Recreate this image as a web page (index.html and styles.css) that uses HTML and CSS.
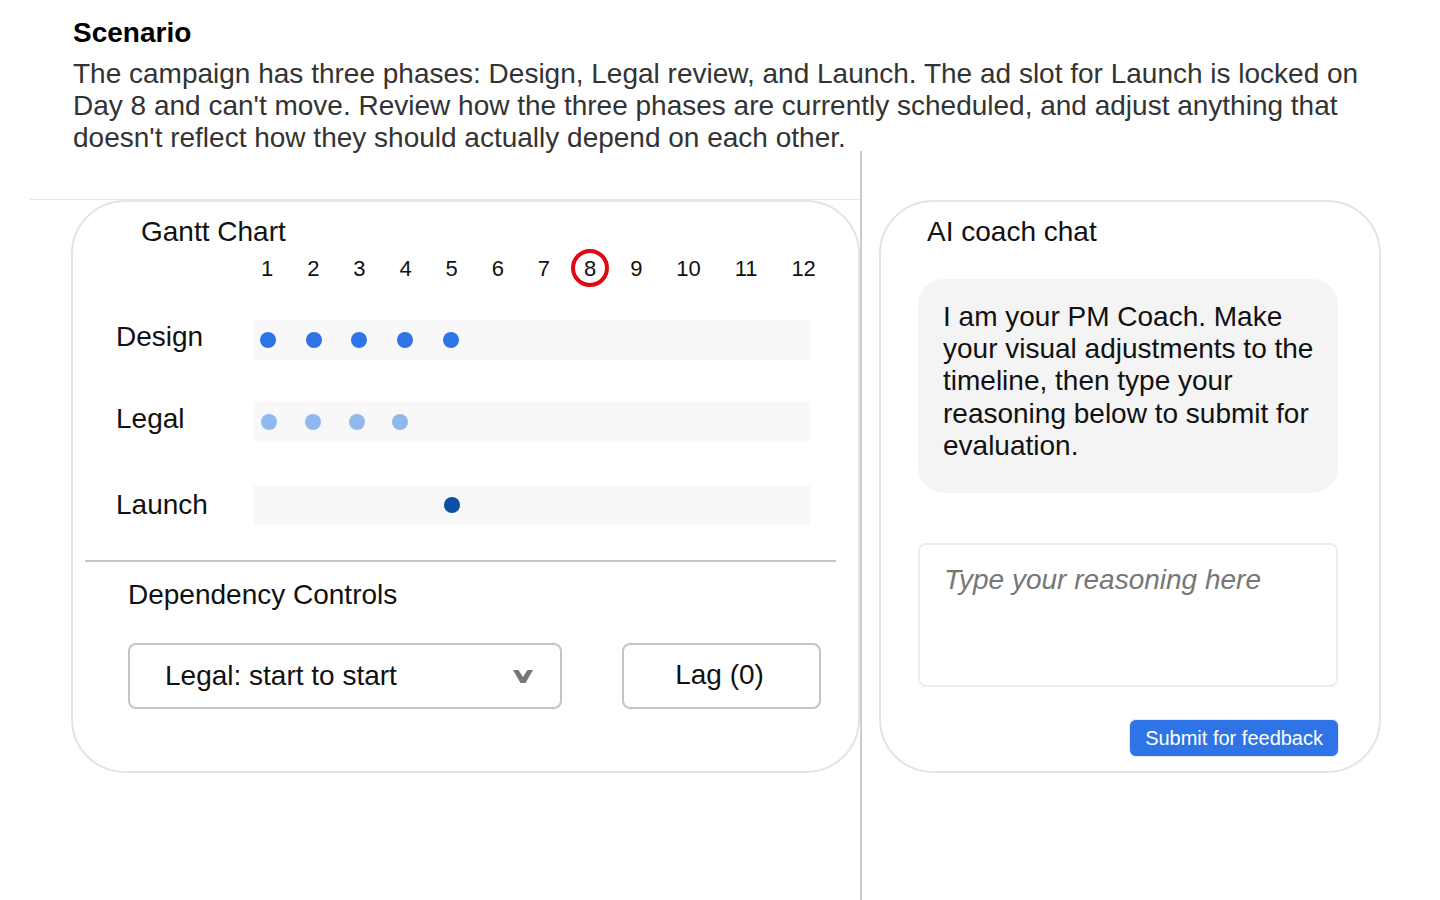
FILE: index.html
```html
<!DOCTYPE html>
<html lang="en">
<head>
<meta charset="utf-8">
<title>PM Coach – Scenario</title>
<link rel="stylesheet" href="styles.css">
</head>
<body>
<header class="scenario">
  <h1 class="scenario-title">Scenario</h1>
  <p class="scenario-text">The campaign has three phases: Design, Legal review, and Launch. The ad slot for Launch is locked on Day 8 and can't move. Review how the three phases are currently scheduled, and adjust anything that doesn't reflect how they should actually depend on each other.</p>
</header>
<main class="workspace">
  <section class="left-col">
    <div class="left-pane">
      <div class="card gantt-card">
        <h2 class="card-title gantt-title">Gantt Chart</h2>
        <div class="days">
          <span class="day">1</span><span class="day">2</span><span class="day">3</span><span class="day">4</span><span class="day">5</span><span class="day">6</span><span class="day">7</span><span class="day day-locked">8</span><span class="day">9</span><span class="day">10</span><span class="day">11</span><span class="day">12</span>
        </div>
        <div class="phase">
          <div class="phase-label">Design</div>
          <div class="track track-design">
            <span class="dot dot-design"></span><span class="dot dot-design"></span><span class="dot dot-design"></span><span class="dot dot-design"></span><span class="dot dot-design"></span>
          </div>
        </div>
        <div class="phase phase-legal">
          <div class="phase-label">Legal</div>
          <div class="track track-legal">
            <span class="dot dot-legal"></span><span class="dot dot-legal"></span><span class="dot dot-legal"></span><span class="dot dot-legal"></span>
          </div>
        </div>
        <div class="phase phase-launch">
          <div class="phase-label phase-label-launch">Launch</div>
          <div class="track track-launch">
            <span class="dot dot-launch"></span>
          </div>
        </div>
        <div class="divider"></div>
        <h3 class="controls-title">Dependency Controls</h3>
        <div class="controls">
          <div class="select">
            <span class="select-value">Legal: start to start</span>
            <svg class="chevron" width="20" height="14" viewBox="0 0 20 14" aria-hidden="true">
              <polygon points="0,1 5.5,1 10,8 14.5,1 20,1 12.5,14 7.5,14" fill="#777777"/>
            </svg>
          </div>
          <button class="lag" type="button">Lag (0)</button>
        </div>
      </div>
    </div>
  </section>
  <section class="right-col">
    <div class="card chat-card">
      <h2 class="card-title chat-title">AI coach chat</h2>
      <div class="bubble">I am your PM Coach. Make your visual adjustments to the timeline, then type your reasoning below to submit for evaluation.</div>
      <textarea class="reasoning" placeholder="Type your reasoning here"></textarea>
      <div class="submit-row">
        <button class="submit" type="button">Submit for feedback</button>
      </div>
    </div>
  </section>
</main>
</body>
</html>
```

FILE: styles.css
```css
*,
*::before,
*::after {
  box-sizing: border-box;
}

html, body {
  height: 100%;
}

body {
  margin: 0;
  background: #ffffff;
  font-family: "Liberation Sans", Arial, sans-serif;
  color: #111111;
  display: flex;
  flex-direction: column;
  overflow: hidden;
}

.scenario {
  padding: 17px 73px 0 73px;
}

.scenario-title {
  margin: 0 0 9px 0;
  font-size: 28px;
  font-weight: bold;
  line-height: 32px;
  color: #000000;
}

.scenario-text {
  margin: 0;
  font-size: 28px;
  line-height: 32px;
  color: #333333;
}

.workspace {
  flex: 1;
  display: flex;
  align-items: stretch;
  margin-top: -3px;
}

.left-col {
  width: 832px;
  margin-left: 30px;
  padding-top: 48px;
  border-right: 2px solid #cccccc;
}

.left-pane {
  border-top: 1px solid #e6e6e6;
}

.right-col {
  padding-top: 49px;
  padding-left: 17px;
}

.card {
  border: 2px solid #e4e4e4;
  border-radius: 54px;
  background: #ffffff;
}

.gantt-card {
  width: 789px;
  margin-left: 41px;
  padding: 14px 0 62px 0;
}

.chat-card {
  width: 502px;
  padding: 14px 0 14px 0;
}

.card-title {
  margin: 0;
  font-size: 28px;
  font-weight: normal;
  line-height: 32px;
  color: #111111;
}

.gantt-title {
  padding-left: 68px;
}

.chat-title {
  padding-left: 46px;
}

/* Day header */
.days {
  display: flex;
  gap: 33.9px;
  margin: 8px 0 0 188px;
  font-size: 22px;
  line-height: 25.3px;
  color: #111111;
}

.day {
  position: relative;
}

.day-locked::after {
  content: "";
  position: absolute;
  left: 50%;
  top: 50%;
  width: 38px;
  height: 38px;
  margin-left: -19px;
  margin-top: -20px;
  border: 4px solid #e30613;
  border-radius: 50%;
}

/* Phases */
.phase {
  display: flex;
  align-items: flex-start;
  margin-top: 38.7px;
  padding-left: 43px;
}

.phase-legal {
  margin-top: 42px;
}

.phase-launch {
  margin-top: 43px;
}

.phase-label {
  width: 138px;
  margin-top: 1.4px;
  font-size: 28px;
  line-height: 32px;
  color: #111111;
}

.phase-label-launch {
  margin-top: 4.3px;
}

.track {
  width: 556px;
  height: 40px;
  background: #f8f8f8;
  display: flex;
  align-items: center;
}

.track-design {
  padding-left: 6px;
  gap: 29.7px;
}

.track-legal {
  padding-left: 7.3px;
  gap: 27.7px;
}

.track-launch {
  padding-left: 189.5px;
}

.dot {
  width: 16px;
  height: 16px;
  border-radius: 50%;
  flex: none;
}

.dot-design {
  background: #2f74e6;
}

.dot-legal {
  background: #8fb8ee;
}

.dot-launch {
  background: #0d4ea6;
}

.divider {
  height: 2px;
  margin: 35px 22px 0 12px;
  background: #c6c6c6;
}

.controls-title {
  margin: 17.3px 0 0 0;
  padding-left: 55px;
  font-size: 28px;
  font-weight: normal;
  line-height: 32px;
  color: #111111;
}

.controls {
  display: flex;
  gap: 60px;
  margin-top: 32px;
  padding-left: 55px;
}

.select {
  width: 434px;
  height: 66px;
  border: 2px solid #c4c4c4;
  border-radius: 8px;
  display: flex;
  align-items: center;
  justify-content: space-between;
  padding: 0 27px 0 35px;
  font-size: 28px;
  color: #111111;
}

.chevron {
  display: block;
  flex: none;
}

.lag {
  width: 199px;
  height: 66px;
  border: 2px solid #c4c4c4;
  border-radius: 8px;
  background: #ffffff;
  font-family: "Liberation Sans", Arial, sans-serif;
  font-size: 28px;
  color: #111111;
  padding: 0 4px 2px 0;
}

/* Chat */
.bubble {
  width: 420px;
  margin: 31px 0 0 37px;
  padding: 22px 22px 31px 25px;
  background: #f4f4f4;
  border-radius: 26px;
  font-size: 28px;
  line-height: 32.2px;
  color: #111111;
}

.reasoning {
  display: block;
  width: 420px;
  height: 144px;
  margin: 50px 0 0 37px;
  padding: 19px 24px;
  border: 2px solid #ededed;
  border-radius: 8px;
  resize: none;
  font-family: "Liberation Sans", Arial, sans-serif;
  font-size: 28px;
  line-height: 32px;
  color: #111111;
  background: #ffffff;
  outline: none;
}

.reasoning::placeholder {
  font-style: italic;
  color: #777777;
  opacity: 1;
}

.submit-row {
  display: flex;
  justify-content: flex-end;
  margin-top: 32px;
  padding-right: 40px;
}

.submit {
  height: 38px;
  padding: 0 15px;
  border: 1px solid #e6ecf6;
  border-radius: 7px;
  background: #2f74e6;
  color: #ffffff;
  font-family: "Liberation Sans", Arial, sans-serif;
  font-size: 20px;
}
```
